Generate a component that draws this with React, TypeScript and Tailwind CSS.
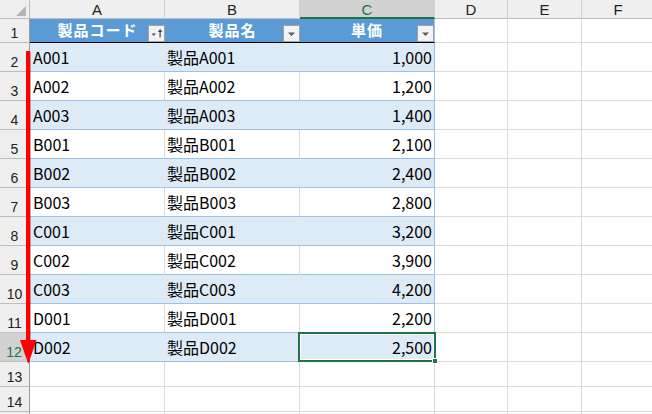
import React from 'react';

const ROWS = [
  ['A001', '製品A001', '1,000'],
  ['A002', '製品A002', '1,200'],
  ['A003', '製品A003', '1,400'],
  ['B001', '製品B001', '2,100'],
  ['B002', '製品B002', '2,400'],
  ['B003', '製品B003', '2,800'],
  ['C001', '製品C001', '3,200'],
  ['C002', '製品C002', '3,900'],
  ['C003', '製品C003', '4,200'],
  ['D001', '製品D001', '2,200'],
  ['D002', '製品D002', '2,500'],
];

const RowHead: React.FC<{ n?: number; active?: boolean }> = ({ n, active }) => (
  <div
    className={
      active
        ? 'w-[30px] shrink-0 h-full flex items-end justify-center pb-[2px] bg-[#d2d2d2] text-[#217346] border-b border-b-[#bdbdbd] border-r-2 border-r-[#217346] text-[14px] leading-none'
        : 'w-[30px] shrink-0 h-full flex items-end justify-center pb-[2px] bg-[#efefef] text-[#222] border-b border-b-[#bdbdbd] border-r border-r-[#9b9b9b] text-[14px] leading-none'
    }
  >
    {n}
  </div>
);

const Empty: React.FC<{ w: string }> = ({ w }) => (
  <div className={`${w} shrink-0 h-full border-r border-b border-[#dadada]`} />
);

const FilterButton: React.FC<{ sorted?: boolean }> = ({ sorted }) => (
  <div className="absolute right-0 bottom-0 w-[17px] h-[17px] bg-[#f3f3f3] border border-[#a0a0a0]">
    <svg width="15" height="15" viewBox="0 0 15 15" className="block">
      {sorted ? (
        <>
          <polygon points="2.5,7.5 7,7.5 4.75,10" fill="#555" />
          <rect x="10.5" y="4.5" width="1.2" height="7" fill="#444" />
          <polygon points="8.9,6 13.3,6 11.1,3" fill="#444" />
        </>
      ) : (
        <polygon points="4,6.5 11,6.5 7.5,10" fill="#595959" />
      )}
    </svg>
  </div>
);

const App: React.FC = () => {
  return (
    <div className="relative w-[652px] h-[414px] overflow-hidden bg-white font-['Noto_Sans_CJK_JP',sans-serif] text-black">
      {/* column headers */}
      <div className="flex h-[19px] font-['Liberation_Sans',sans-serif] text-[15px] text-[#222] leading-none">
        <div className="w-[30px] shrink-0 h-full relative bg-[#efefef] border-r border-b border-[#bdbdbd]">
          <svg width="30" height="19" className="absolute left-0 top-0">
            <polygon points="26,6 26,16 16,16" fill="#b5b5b5" />
          </svg>
        </div>
        <div className="w-[135px] shrink-0 h-full flex items-center justify-center bg-[#efefef] border-r border-r-[#d0d0d0] border-b border-b-[#bdbdbd]">A</div>
        <div className="w-[135px] shrink-0 h-full flex items-center justify-center bg-[#efefef] border-r border-r-[#d0d0d0] border-b border-b-[#bdbdbd]">B</div>
        <div className="w-[135px] shrink-0 h-full flex items-center justify-center pt-[1px] bg-[#d2d2d2] text-[#217346] border-r border-r-[#d0d0d0] border-b-2 border-b-[#217346]">C</div>
        <div className="w-[73px] shrink-0 h-full flex items-center justify-center bg-[#efefef] border-r border-r-[#d0d0d0] border-b border-b-[#bdbdbd]">D</div>
        <div className="w-[74px] shrink-0 h-full flex items-center justify-center bg-[#efefef] border-r border-r-[#d0d0d0] border-b border-b-[#bdbdbd]">E</div>
        <div className="w-[73px] shrink-0 h-full flex items-center justify-center bg-[#efefef] border-r border-r-[#d0d0d0] border-b border-b-[#bdbdbd]">F</div>
      </div>

      {/* row 1: table header */}
      <div className="flex h-[24px]">
        <div className="font-['Liberation_Sans',sans-serif] h-full">
          <RowHead n={1} />
        </div>
        <div className="relative w-[135px] shrink-0 h-full flex items-center justify-center bg-[#5b9bd5] border-b border-b-black text-white font-bold text-[15px] tracking-[1px]">
          製品コード
          <FilterButton sorted />
        </div>
        <div className="relative w-[135px] shrink-0 h-full flex items-center justify-center bg-[#5b9bd5] border-b border-b-black text-white font-bold text-[15px] tracking-[1px]">
          製品名
          <FilterButton />
        </div>
        <div className="relative w-[135px] shrink-0 h-full flex items-center justify-center bg-[#5b9bd5] border-b border-b-black border-r border-r-[#9bc2e6] text-white font-bold text-[15px] tracking-[1px]">
          単価
          <FilterButton />
        </div>
        <Empty w="w-[73px]" />
        <Empty w="w-[74px]" />
        <Empty w="w-[73px]" />
      </div>

      {/* data rows */}
      {ROWS.map((r, i) => {
        const band = i % 2 === 0;
        const last = i === ROWS.length - 1;
        return (
          <div key={r[0]} className="flex h-[29px] text-[16px] leading-none">
            <div className="font-['Liberation_Sans',sans-serif] h-full">
              <RowHead n={i + 2} active={last} />
            </div>
            <div
              className={
                band
                  ? 'w-[135px] shrink-0 h-full flex items-center pl-[3px] bg-[#ddebf7] border-b border-b-[#9bc2e6]'
                  : 'w-[135px] shrink-0 h-full flex items-center pl-[3px] bg-white border-b border-b-[#9bc2e6] border-r border-r-[#dadada]'
              }
            >
              {r[0]}
            </div>
            <div
              className={
                band
                  ? 'w-[135px] shrink-0 h-full flex items-center pl-[2px] bg-[#ddebf7] border-b border-b-[#9bc2e6]'
                  : 'w-[135px] shrink-0 h-full flex items-center pl-[2px] bg-white border-b border-b-[#9bc2e6] border-r border-r-[#dadada]'
              }
            >
              {r[1]}
            </div>
            <div
              className={
                band
                  ? 'relative w-[135px] shrink-0 h-full flex items-center justify-end pr-[2px] bg-[#ddebf7] border-b border-r border-[#9bc2e6]'
                  : 'relative w-[135px] shrink-0 h-full flex items-center justify-end pr-[2px] bg-white border-b border-r border-[#9bc2e6]'
              }
            >
              {r[2]}
              {last && (
                <div className="absolute -left-[2px] -top-[1px] -right-[2px] -bottom-[1px] border-2 border-[#217346] shadow-[inset_0_0_0_1px_#ffffff]">
                  <div className="absolute -right-[4px] -bottom-[4px] w-[6px] h-[6px] bg-[#217346] border border-white" />
                </div>
              )}
            </div>
            <Empty w="w-[73px]" />
            <Empty w="w-[74px]" />
            <Empty w="w-[73px]" />
          </div>
        );
      })}

      {/* empty rows */}
      {[13, 14, 0].map((n) => (
        <div key={n} className="flex h-[25px]">
          <div className="font-['Liberation_Sans',sans-serif] h-full">
            <RowHead n={n || undefined} />
          </div>
          <Empty w="w-[135px]" />
          <Empty w="w-[135px]" />
          <Empty w="w-[135px]" />
          <Empty w="w-[73px]" />
          <Empty w="w-[74px]" />
          <Empty w="w-[73px]" />
        </div>
      ))}

      {/* red arrow annotation */}
      <svg width="40" height="414" className="absolute left-0 top-0 pointer-events-none">
        <rect x="27.5" y="52" width="3.5" height="290" fill="#6b0000" opacity="0.35" />
        <rect x="26" y="51" width="4" height="290" fill="#ff0000" />
        <polygon points="20,340 36.5,340 28.3,364" fill="#ff0000" />
      </svg>
    </div>
  );
};

export default App;
